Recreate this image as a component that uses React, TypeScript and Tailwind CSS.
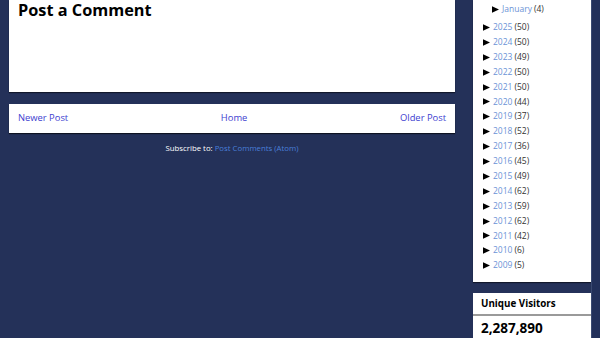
import React from "react";

const years: [string, number][] = [
  ["2025", 50], ["2024", 50], ["2023", 49], ["2022", 50], ["2021", 50],
  ["2020", 44], ["2019", 37], ["2018", 52], ["2017", 36], ["2016", 45],
  ["2015", 49], ["2014", 62], ["2013", 59], ["2012", 62], ["2011", 42],
  ["2010", 6], ["2009", 5],
];

function Tri() {
  return (
    <svg width="7" height="7" viewBox="0 0 7 7" className="mr-[3px] shrink-0">
      <path d="M0 0.3 L7 3.5 L0 6.7 Z" fill="#000" />
    </svg>
  );
}

export default function App() {
  return (
    <div
      className="w-[600px] h-[338px] overflow-hidden bg-[#243159] flex"
      style={{ fontFamily: '"Open Sans", "Liberation Sans", sans-serif' }}
    >
      <div className="w-[446px] ml-[9px] flex flex-col">
        <div className="bg-white h-[92px] shrink-0 px-[9px] shadow-[0_1px_1px_rgba(0,0,0,0.5)]">
          <h2 className="text-[16.3px] font-bold text-black leading-[20px]">Post a Comment</h2>
        </div>
        <div className="mt-[12px] bg-white h-[29px] shrink-0 px-[9px] flex items-center justify-between text-[9.4px] text-[#4040d0] shadow-[0_1px_1px_rgba(0,0,0,0.6)]">
          <span>Newer Post</span>
          <span>Home</span>
          <span>Older Post</span>
        </div>
        <div className="mt-[10px] text-center text-[7.8px] text-white">
          Subscribe to: <span className="text-[#4a7fd8]">Post Comments (Atom)</span>
        </div>
      </div>
      <div className="w-[118px] ml-[18px] flex flex-col">
        <div className="bg-white h-[282px] shrink-0 pl-[10px] pt-[2px] text-[8.5px] shadow-[0_1px_1px_rgba(0,0,0,0.5)]">
          <div className="h-[14px] flex items-center pl-[9px]">
            <Tri />
            <span className="text-[#6c93d6]">January</span>
            <span className="text-[#333] ml-[2px]">(4)</span>
          </div>
          <div className="mt-[4px] flex flex-col">
            {years.map(([y, n]) => (
              <div key={y} className="h-[14.9px] flex items-center">
                <Tri />
                <span className="text-[#6c93d6]">{y}</span>
                <span className="text-[#333] ml-[2px]">({n})</span>
              </div>
            ))}
          </div>
        </div>
        <div className="mt-[11px] bg-white flex-1 shrink-0">
          <div className="h-[23px] pt-[2px] flex items-center px-[8px] text-[9.8px] font-bold text-black border-b-2 border-[#9a9a9a]">
            Unique Visitors
          </div>
          <div className="px-[8px] pt-[6px] text-[13.5px] font-bold text-black leading-none">2,287,890</div>
        </div>
      </div>
      <div className="flex-1 bg-[#22305a] border-l border-[#3a4a72]"></div>
    </div>
  );
}
